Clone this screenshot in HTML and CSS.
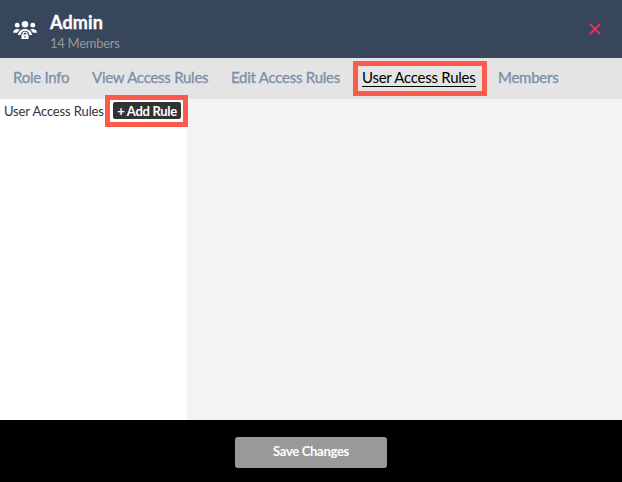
FILE: index.html
```html
<!DOCTYPE html>
<html lang="en">
<head>
<meta charset="utf-8">
<title>Admin</title>
<link rel="stylesheet" href="styles.css">
</head>
<body>
<header class="header">
  <svg class="group" width="24" height="19" viewBox="0 0 24 19" fill="#fff">
    <circle cx="12" cy="3.300" r="3.200"/>
    <circle cx="4.200" cy="4.200" r="2.400"/>
    <circle cx="19.800" cy="4.200" r="2.400"/>
    <path d="M0 11.800C.3 9.100 2 8 4.500 8c.9 0 1.600.2 2.200.5L4 11.800Z"/>
    <path d="M24 11.800c-.3-2.700-2-3.800-4.500-3.800-.9 0-1.600.2-2.200.5l2.700 3.300Z"/>
    <path d="M4.800 14C5.600 10.300 8.300 8 12 8s6.400 2.300 7.200 6h-2.600c-.7-2.700-2.300-4.200-4.600-4.200S8.100 11.300 7.400 14Z"/>
    <path fill-rule="evenodd" d="M8.500 13.500h.8c0-1.900 1-2.900 2.700-2.900s2.700 1 2.700 2.900h.8V18h-7ZM10.500 13.500h3c0-1.100-.5-1.700-1.500-1.700s-1.500.6-1.500 1.700ZM11.400 14.900v1.500h1.200v-1.500Z"/>
  </svg>
  <div class="heading">
    <h1 class="title">Admin</h1>
    <p class="count">14 Members</p>
  </div>
  <svg class="close" width="12" height="12" viewBox="0 0 12 12"><path d="M.8.8l10.400 10.400M11.200.8L.8 11.200" stroke="#f92d64" stroke-width="1.700"/></svg>
</header>
<nav class="tabs">
  <a class="tab role">Role Info</a>
  <a class="tab view">View Access Rules</a>
  <a class="tab edit">Edit Access Rules</a>
  <a class="tab current"><span class="underlined">User Access Rules</span></a>
  <a class="tab">Members</a>
</nav>
<main class="content">
  <aside class="rules">
    <span class="label">User Access Rules</span>
    <div class="callout"><button class="add">+ Add Rule</button></div>
  </aside>
</main>
<footer class="footer"><button class="save">Save Changes</button></footer>
</body>
</html>
```
FILE: styles.css
```css
* { box-sizing: border-box; }
body {
  margin: 0;
  height: 482px;
  display: flex;
  flex-direction: column;
  overflow: hidden;
  font-family: Lato, sans-serif;
  background: #f1f3f5;
}
.header {
  height: 58px;
  display: flex;
  align-items: flex-start;
  padding-left: 13px;
  background: #38465b;
}
.group { margin-top: 21px; }
.heading { margin: 11px 0 0 13px; flex: 1; }
.title {
  margin: 0;
  font-size: 18px;
  line-height: 22px;
  letter-spacing: 0.15px;
  color: #fff;
  -webkit-text-stroke: 0.3px;
}
.count {
  margin: 2px 0 0;
  font-size: 13px;
  line-height: 17px;
  letter-spacing: -0.28px;
  color: #999;
}
.close { margin: 23px 21px 0 0; }
.tabs {
  height: 41px;
  display: flex;
  align-items: flex-start;
  padding: 3px 0 0 13px;
  background: #e4e4e4;
  white-space: nowrap;
}
.tab {
  font-size: 15px;
  line-height: 18px;
  letter-spacing: -0.25px;
  margin-top: 7px;
  color: #7b8fa8;
  -webkit-text-stroke: 0.3px;
}
.role { width: 79px; }
.view { width: 139px; }
.edit { width: 122px; }
.current {
  width: 134px;
  height: 35px;
  margin: 0 11px 0 0;
  padding: 2px 4px;
  border: 5px solid #fc5b4c;
  color: #000;
  -webkit-text-stroke: 0;
}
.underlined {
  display: block;
  width: 114px;
  height: 19px;
  border-bottom: 1px solid #000;
}
.content { height: 321px; }
.rules {
  width: 187px;
  height: 321px;
  display: flex;
  align-items: flex-start;
  padding-left: 4px;
  background: #fff;
}
.label {
  width: 101px;
  flex: none;
  margin-top: 4px;
  font-size: 13px;
  line-height: 17px;
  letter-spacing: -0.13px;
  color: #333;
  white-space: nowrap;
}
.callout {
  width: 83px;
  height: 32px;
  flex: none;
  position: relative;
  margin-top: -4px;
  padding: 2px 3px;
  border: 5px solid #fc5b4c;
  background: #fff;
}
.add, .save {
  display: block;
  border: 0;
  padding: 0;
  font-family: inherit;
  font-weight: 700;
  color: #fff;
  white-space: nowrap;
}
.add {
  width: 68px;
  height: 17px;
  padding-top: 1px;
  border-radius: 2px;
  background: #333;
  font-size: 13px;
  line-height: 16px;
  letter-spacing: -0.3px;
}
.footer {
  height: 62px;
  padding-top: 17px;
  background: #000;
}
.save {
  width: 152px;
  height: 31px;
  margin: 0 auto;
  padding-bottom: 3px;
  border-radius: 3px;
  background: #999;
  font-size: 13px;
  letter-spacing: -0.3px;
}
```
